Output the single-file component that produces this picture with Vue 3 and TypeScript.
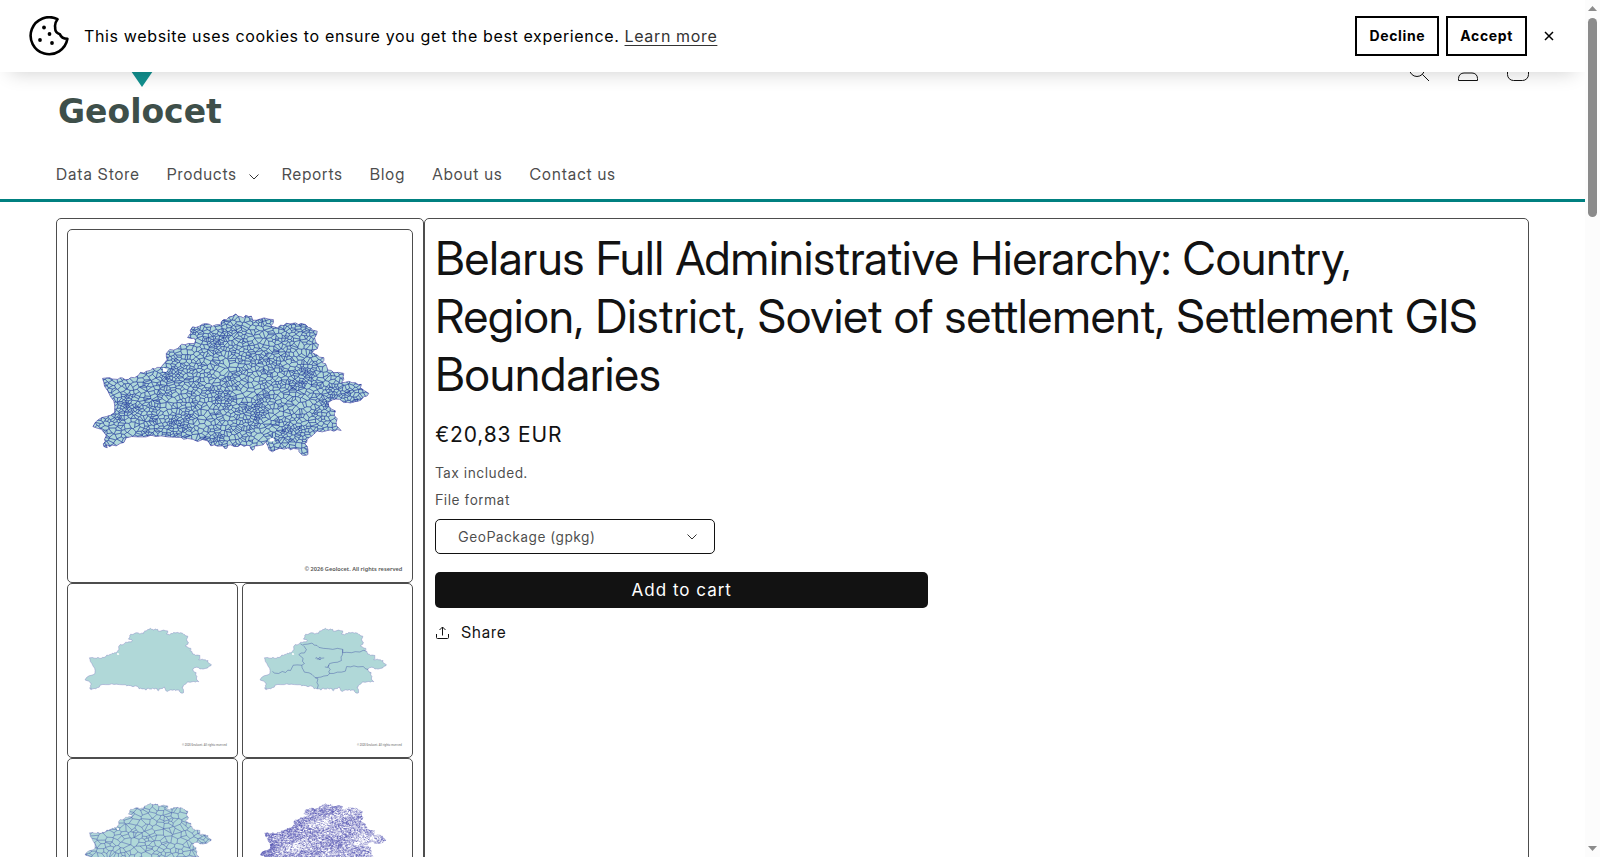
<script setup lang="ts">
import { ref } from 'vue'

interface NavItem { label: string; menu?: boolean }

const navItems: NavItem[] = [
  { label: 'Data Store' },
  { label: 'Products', menu: true },
  { label: 'Reports' },
  { label: 'Blog' },
  { label: 'About us' },
  { label: 'Contact us' },
]

const formats = ['GeoPackage (gpkg)', 'Shapefile (shp)', 'GeoJSON (geojson)']
const format = ref(formats[0])
const cookieBar = ref(true)

/** Country outline, in map units. */
const outline =
  'M154 507L163 506 175 505 184 509 200 510 207 505 215 506 222 511 232 510 240 504 250 505 262 498 268 489 278 491 285 486 298 483 304 477 312 479 318 474 330 474 336 465 340 462 348 450 346 441 346 432 356 420 368 422 380 417 392 404 402 406 412 402 430 402 434 394 430 386 420 387 410 384 420 370 418 362 425 352 435 354 445 350 455 344 465 342 475 344 485 350 497 345 510 346 511 337 518 330 527 330 535 322 545 320 555 313 562 320 570 321 578 325 585 317 594 321 602 320 606 332 617 332 630 328 640 325 655 329 668 330 668 340 660 350 670 352 680 355 690 347 700 348 706 341 718 343 735 340 743 345 752 342 765 345 774 354 780 355 786 362 800 365 798 375 792 385 795 395 798 402 804 405 800 418 790 422 785 430 800 437 807 443 820 445 820 453 815 460 825 463 828 470 832 482 842 483 850 490 864 489 880 492 878 502 880 510 872 520 884 519 895 516 905 520 915 520 924 526 933 525 930 535 942 544 955 552 950 560 940 562 932 572 925 575 914 577 900 581 890 579 880 580 868 570 856 569 845 572 833 580 835 592 844 600 855 605 852 613 852 620 860 628 857 640 858 650 866 657 872 664 860 661 850 666 840 662 830 664 815 668 800 665 790 675 782 682 777 684 770 690 768 700 762 703 770 712 772 722 772 736 765 739 755 738 745 728 745 720 728 718 720 722 712 716 700 720 688 717 675 722 665 728 655 722 652 712 645 698 637 707 620 710 612 710 611 719 606 724 600 719 598 710 588 708 580 712 570 706 562 712 550 712 540 707 532 708 528 717 522 718 516 710 500 711 490 707 480 710 474 700 470 695 455 691 440 697 425 690 410 688 398 690 390 684 370 684 350 683 330 680 315 682 300 678 285 683 260 683 242 682 225 686 218 700 208 702 195 710 184 708 175 712 165 705 168 716 158 712 156 704 162 698 160 690 165 680 163 675 150 660 138 657 125 652 132 640 140 632 152 625 165 622 178 618 190 610 191 590 188 575 178 562 170 545 160 531 158 520Z'

/** Region borders, in thumbnail units. */
const regions = [
  'M750 222L756 226 762 224 772 223 785 220 792 226 800 227 806 233 820 236 835 237 848 239 862 236 878 239 878 249 890 248 905 249 916 246 930 247 940 242 952 244',
  'M878 239L877 256 873 262 874 273 862 278 850 279 838 282 834 292 840 300 836 306 838 312 833 318 820 320 812 323 795 325 785 315 776 310 762 308 758 300 755 295 754 287 762 282 756 275 758 266 745 255 752 250 762 250 768 240 760 228',
  'M754 287L740 286 728 287 720 303 712 302 705 309 695 306 684 312 672 311 665 306',
  'M838 312L850 312 862 308 874 308 886 305 890 291 902 292 912 289 924 292 940 291 948 298 955 300 958 306 968 309',
  'M795 325L803 328 800 340 804 347 801 358',
  'M795 266L800 264 804 268 809 262 812 266 822 265M799 268L812 269 M806 270l6 -2M824 292L832 294 836 286',
].join('')

type Point = [number, number]

function generator(seed: number): () => number {
  let s = seed
  return () => {
    s = (s * 1664525 + 1013904223) % 4294967296
    return s / 4294967296
  }
}

/** Part of a polygon that is nearer to a than to b. */
function nearer(poly: Point[], a: Point, b: Point): Point[] {
  const nx = b[0] - a[0]
  const ny = b[1] - a[1]
  const k = (b[0] * b[0] + b[1] * b[1] - a[0] * a[0] - a[1] * a[1]) / 2
  const side = (p: Point) => p[0] * nx + p[1] * ny - k
  const out: Point[] = []
  poly.forEach((p, i) => {
    const q = poly[(i + 1) % poly.length]
    const sp = side(p)
    const sq = side(q)
    if (sp <= 0) out.push(p)
    if (sp <= 0 !== sq <= 0) {
      const t = sp / (sp - sq)
      out.push([p[0] + (q[0] - p[0]) * t, p[1] + (q[1] - p[1]) * t])
    }
  })
  return out
}

/** Voronoi cells over the country; `cluster` adds small cells around dense spots. */
function cells(step: number, stretch: number, seed: number, cluster: number): string {
  const rnd = generator(seed)
  const sites: Point[] = []
  for (let y = 300; y < 750; y += step) {
    for (let x = 110 / stretch; x < 970 / stretch; x += step) {
      const dense =
        Math.sin((x * stretch) / 31 + y / 23) + Math.sin((x * stretch) / 53 - y / 27) + Math.sin(x / 13 + y / 41)
      const at = (): Point => [x + (rnd() * 1.8 - 0.4) * step, y + (rnd() * 1.8 - 0.4) * step]
      sites.push(at())
      if (rnd() < cluster * (dense + 1.4)) sites.push(at())
      if (rnd() < cluster * (dense - 0.6)) sites.push(at(), at())
    }
  }
  const reach = step * 2.6
  const grid = new Map<string, Point[]>()
  const key = (x: number, y: number) => `${Math.floor(x / reach)},${Math.floor(y / reach)}`
  for (const s of sites) {
    const k = key(s[0], s[1])
    if (!grid.has(k)) grid.set(k, [])
    grid.get(k)!.push(s)
  }
  let d = ''
  for (const s of sites) {
    let poly: Point[] = [
      [s[0] - reach, s[1] - reach],
      [s[0] + reach, s[1] - reach],
      [s[0] + reach, s[1] + reach],
      [s[0] - reach, s[1] + reach],
    ]
    for (let i = -1; i <= 1; i++) {
      for (let j = -1; j <= 1; j++) {
        for (const o of grid.get(key(s[0] + i * reach, s[1] + j * reach)) ?? []) {
          if (o !== s) poly = nearer(poly, s, o)
        }
      }
    }
    d += 'M' + poly.map(([x, y]) => `${(x * stretch).toFixed(1)} ${y.toFixed(1)}`).join('L') + 'Z'
  }
  return d
}

/** Settlement footprints, denser towards the west and centre. */
function specks(count: number, seed: number, spread: number, gate: number): string {
  const rnd = generator(seed)
  let d = ''
  for (let i = 0; i < count; i++) {
    const x = 120 + Math.pow(rnd(), spread) * 840
    const y = 310 + rnd() * 430
    const wave = Math.sin(x / 67 + y / 49) + Math.sin(x / 91 - y / 33) + Math.sin(y / 17 + x / 50)
    if (wave + rnd() * 6 < gate) continue
    const w = 3 + rnd() * 7
    d += `M${x.toFixed(0)} ${y.toFixed(0)}h${w.toFixed(1)}v${(2 + rnd() * 3).toFixed(1)}h-${w.toFixed(1)}z`
  }
  return d
}

type Layer = 'parcels' | 'country' | 'regions' | 'districts' | 'settlements'
interface MapImage { id: Layer; alt: string; large?: boolean; credit?: boolean }

const maps: MapImage[] = [
  { id: 'parcels', alt: 'Belarus soviets of settlement', large: true, credit: true },
  { id: 'country', alt: 'Belarus country boundary', credit: true },
  { id: 'regions', alt: 'Belarus regions', credit: true },
  { id: 'districts', alt: 'Belarus districts' },
  { id: 'settlements', alt: 'Belarus settlements' },
]

const parcelLines = cells(13, 1.25, 7, 0.45)
const districtLines = cells(32, 1.3, 11, 0.12)
const speckLight = specks(12000, 5, 1, 1)
const speckDark = specks(13000, 9, 1.5, 2)
</script>

<template>
  <div class="window">
    <div class="page">
      <section v-if="cookieBar" class="cookie" aria-label="Cookie notice">
        <svg class="cookie-icon" viewBox="0 0 40 40" aria-hidden="true">
          <path d="M28.500 3.200A18.500 18.500 0 1 0 38.400 22.800C34 22.600 31.800 20.700 30.900 18.200 27.500 17.200 25.900 15 26.200 11.500 25.600 8.500 26.600 5.700 28.500 3.200Z" fill="none" stroke="#000" stroke-width="2.600" stroke-linejoin="round" />
          <circle cx="15" cy="11.500" r="1.900" /><circle cx="20.500" cy="18" r="1.900" />
          <circle cx="11" cy="24" r="1.900" /><circle cx="23" cy="27" r="1.900" />
        </svg>
        <p class="cookie-text">This website uses cookies to ensure you get the best experience. <a href="#">Learn more</a></p>
        <button class="cookie-button" type="button">Decline</button>
        <button class="cookie-button" type="button">Accept</button>
        <button class="cookie-close" type="button" aria-label="Close" @click="cookieBar = false">
          <svg viewBox="0 0 10 10"><path d="M1 1L9 9M9 1L1 9" stroke="#000" stroke-width="1.500" /></svg>
        </button>
      </section>

      <header class="header">
        <div class="header-top">
          <a class="logo" href="#" aria-label="Geolocet">
            <svg class="logo-pin" viewBox="0 0 60 70" aria-hidden="true">
              <path d="M30 70L8 38A26 26 0 1 1 52 38Z" fill="#12908f" />
              <circle cx="30" cy="25" r="11" fill="#fff" />
            </svg>
            <span class="logo-name">Geolocet</span>
          </a>
          <div class="tools">
            <a href="#" aria-label="Search">
              <svg viewBox="0 0 22 22"><circle cx="10" cy="9" r="7.500" /><path d="M15.300 14.300L22 21" /></svg>
            </a>
            <a href="#" aria-label="Log in">
              <svg viewBox="0 0 22 22"><circle cx="11" cy="5.500" r="4.500" /><path d="M1.500 20.500V18.500C1.500 15 4 13 7 13H15C18 13 20.500 15 20.500 18.500V20.500Z" /></svg>
            </a>
            <a href="#" aria-label="Cart">
              <svg viewBox="0 0 22 22"><path d="M.5 5.500H21.500V14.500A6 6 0 0 1 15.500 20.500H6.500A6 6 0 0 1 .5 14.500ZM6.500 5.500a4.500 4.500 0 0 1 9 0" /></svg>
            </a>
          </div>
        </div>
        <nav class="nav" aria-label="Main">
          <a v-for="item in navItems" :key="item.label" href="#" :class="{ menu: item.menu }">
            {{ item.label }}
            <svg v-if="item.menu" class="caret" viewBox="0 0 10 6"><path d="M.5 .5L5 5 9.500 .5" /></svg>
          </a>
        </nav>
      </header>

      <main class="product">
        <section class="gallery" aria-label="Product images">
          <figure v-for="map in maps" :key="map.id" :class="['shot', { large: map.large }]">
            <svg :viewBox="map.large ? '0 0 1036 1059' : '-37 -38 1111 1135'" role="img" :aria-label="map.alt">
              <defs><clipPath :id="'clip-' + map.id"><path :d="outline" /></clipPath></defs>
              <g transform="translate(-50 -61)">
                <path v-if="map.id !== 'settlements'" :d="outline" class="land" />
                <g :clip-path="`url(#clip-${map.id})`">
                  <path v-if="map.id === 'parcels'" :d="parcelLines" class="parcel" />
                  <path v-if="map.id === 'districts'" :d="districtLines" class="district" />
                  <template v-if="map.id === 'settlements'">
                    <path :d="speckLight" class="speck-light" />
                    <path :d="speckDark" class="speck-dark" />
                  </template>
                  <path v-if="map.id === 'regions'" :d="regions" class="region" transform="translate(52 58) scale(2.169) translate(-594 -57.600)" />
                </g>
                <g v-if="map.id !== 'settlements'" class="hole">
                  <path d="M336 475L346 477 350 483 344 488 335 486Z" />
                  <path v-if="map.id === 'parcels'" d="M657 688L667 686 672 691 668 697 657 696Z" />
                </g>
              </g>
              <text v-if="map.credit" x="1006" y="1027" text-anchor="end" :class="['credit', { faint: !map.large }]">© 2026 Geolocet. All rights reserved</text>
            </svg>
          </figure>
        </section>

        <section class="info">
          <h1>Belarus Full Administrative Hierarchy: Country, Region, District, Soviet of settlement, Settlement GIS Boundaries</h1>
          <p class="price">€20,83 EUR</p>
          <p class="note">Tax included.</p>
          <form class="form" @submit.prevent>
            <label class="note" for="format">File format</label>
            <div class="select">
              <select id="format" v-model="format">
                <option v-for="f in formats" :key="f">{{ f }}</option>
              </select>
              <svg class="caret" viewBox="0 0 10 6"><path d="M.5 .5L5 5 9.500 .5" /></svg>
            </div>
            <button class="add" type="submit">Add to cart</button>
          </form>
          <button class="share" type="button">
            <svg viewBox="0 0 13 13"><path d="M.5 8V11.500A1 1 0 0 0 1.500 12.500H11.500A1 1 0 0 0 12.500 11.500V8M6.500 9.500V1M3.500 4L6.500 1 9.500 4" /></svg>
            Share
          </button>
        </section>
      </main>
    </div>

    <div class="scrollbar" aria-hidden="true">
      <svg viewBox="0 0 9 5"><path d="M4.500 0L9 5H0Z" /></svg>
      <div class="track"><div class="thumb"></div></div>
      <svg viewBox="0 0 9 5"><path d="M0 0H9L4.500 5Z" /></svg>
    </div>
  </div>
</template>

<style>
body { margin: 0; background: #fff; overflow: hidden; }
</style>

<style scoped>
* { box-sizing: border-box; }
.window {
  display: flex;
  height: 100vh;
  overflow: hidden;
  font-family: "Inter Display", Inter, sans-serif;
  font-size: 16px;
  letter-spacing: 1px;
  color: #121212;
}
button, select {
  font-family: inherit;
  font-size: 16px;
  line-height: 24px;
  letter-spacing: inherit;
}
.page { position: relative; flex: 1; min-width: 0; overflow: hidden; }

.cookie {
  position: absolute;
  inset: 0 0 auto;
  z-index: 2;
  display: flex;
  align-items: center;
  height: 72px;
  padding: 0 21px 0 29px;
  background: #fff;
  color: #000;
  font-family: Inter, sans-serif;
  letter-spacing: 0.04em;
  box-shadow: 0 10px 20px -10px rgba(0, 0, 0, 0.2);
}
.cookie-icon { width: 40px; height: 40px; margin-right: 15px; }
.cookie-text { flex: 1; margin: 0; line-height: 24px; }
.cookie-text a { color: #333; text-underline-offset: 3px; }
.cookie-button {
  height: 40px;
  margin-right: 7px;
  padding: 0 12px;
  border: 2px solid #000;
  background: #fff;
  color: #000;
  font-size: 14px;
  font-weight: 700;
}
.cookie-close { display: flex; padding: 10px; border: 0; background: none; }
.cookie-close svg { width: 10px; height: 10px; }

.header { padding: 0 56px; border-bottom: 3px solid #008080; }
.header-top { display: flex; justify-content: space-between; align-items: center; height: 142px; }
.logo { display: flex; flex-direction: column; align-items: center; padding-top: 10px; color: #3e4f4a; text-decoration: none; }
.logo-pin { width: 60px; height: 70px; }
.logo-name { padding: 2px 6px 0 2px; font: 700 33px/46px "DejaVu Sans", sans-serif; letter-spacing: normal; }
.tools { display: flex; gap: 28px; }
.tools a { display: flex; color: #121212; }
.tools svg { width: 22px; height: 22px; fill: none; stroke: currentColor; stroke-width: 1; }
.nav { display: flex; gap: 27px; height: 57px; padding-top: 20px; line-height: 24px; }
.nav a { color: #4d4d4d; text-decoration: none; }
.caret { width: 10px; height: 6px; fill: none; stroke: #333; }
.nav .caret { margin-left: 7px; }
.nav .menu { margin-right: -4px; }

.product { display: grid; grid-template-columns: 1fr 3fr; padding: 16px 56px 0; }
.gallery, .info { min-width: 0; min-height: 760px; padding: 10px; border: 1px solid #4d4d4d; border-radius: 5px; }
.gallery { display: grid; grid-template-columns: 1fr 1fr; align-content: start; column-gap: 4px; }
.shot { display: flex; aspect-ratio: 346 / 354; margin: 0; border: 1px solid #4d4d4d; border-radius: 5px; overflow: hidden; }
.large { grid-column: 1 / -1; }
.shot svg { width: 100%; height: 100%; }
.land { fill: #b0d8d8; stroke: #8484c4; stroke-width: 3; }
.parcel { fill: none; stroke: #1f349c; stroke-opacity: 0.6; stroke-width: 2; }
.district { fill: none; stroke: #3443a6; stroke-opacity: 0.5; stroke-width: 3; }
.region { fill: none; stroke: #35439f; stroke-width: 2; stroke-opacity: 0.6; }
.speck-light { fill: #3a3aa5; fill-opacity: 0.4; }
.speck-dark { fill: #24249c; fill-opacity: 0.6; }
.hole { fill: #fff; }
.credit { font: 600 17px "Noto Sans", sans-serif; letter-spacing: normal; fill: #555; }
.faint { fill: #888; }

h1 { margin: 0; padding-right: 16px; font-size: 46px; font-weight: 400; line-height: 58px; letter-spacing: normal; }
.price { margin: 17px 0 0; font-family: Inter, sans-serif; font-size: 21px; line-height: 30px; letter-spacing: 0.04em; }
.note { display: block; margin: 12px 0 0; font-size: 14px; line-height: 21px; color: #4d4d4d; }
.form .note { margin-top: 6px; }
.select { position: relative; width: 280px; margin-top: 9px; }
.select select {
  display: block;
  width: 100%;
  height: 35px;
  padding: 0 22px;
  appearance: none;
  border: 1px solid #121212;
  border-radius: 5px;
  background: #fff;
  color: #4d4d4d;
  font-size: 14px;
}
.select .caret { position: absolute; top: 15px; right: 18px; }
.add {
  display: block;
  width: 100%;
  max-width: 493px;
  height: 36px;
  margin-top: 18px;
  border: 0;
  border-radius: 5px;
  background: #121212;
  color: #fff;
  font-family: Inter, sans-serif;
  font-size: 17px;
}
.share {
  display: flex;
  align-items: center;
  gap: 12px;
  margin-top: 12px;
  padding: 0 1px;
  border: 0;
  background: none;
  color: #121212;
}
.share svg { width: 13px; height: 13px; fill: none; stroke: #121212; }

.scrollbar { display: flex; flex-direction: column; align-items: center; width: 15px; padding: 6px 0; background: #fcfcfc; }
.scrollbar svg { width: 9px; height: 5px; fill: #8b8b8b; }
.track { flex: 1; width: 9px; padding-top: 7px; }
.thumb { height: 24%; border-radius: 5px; background: #8b8b8b; }
</style>
